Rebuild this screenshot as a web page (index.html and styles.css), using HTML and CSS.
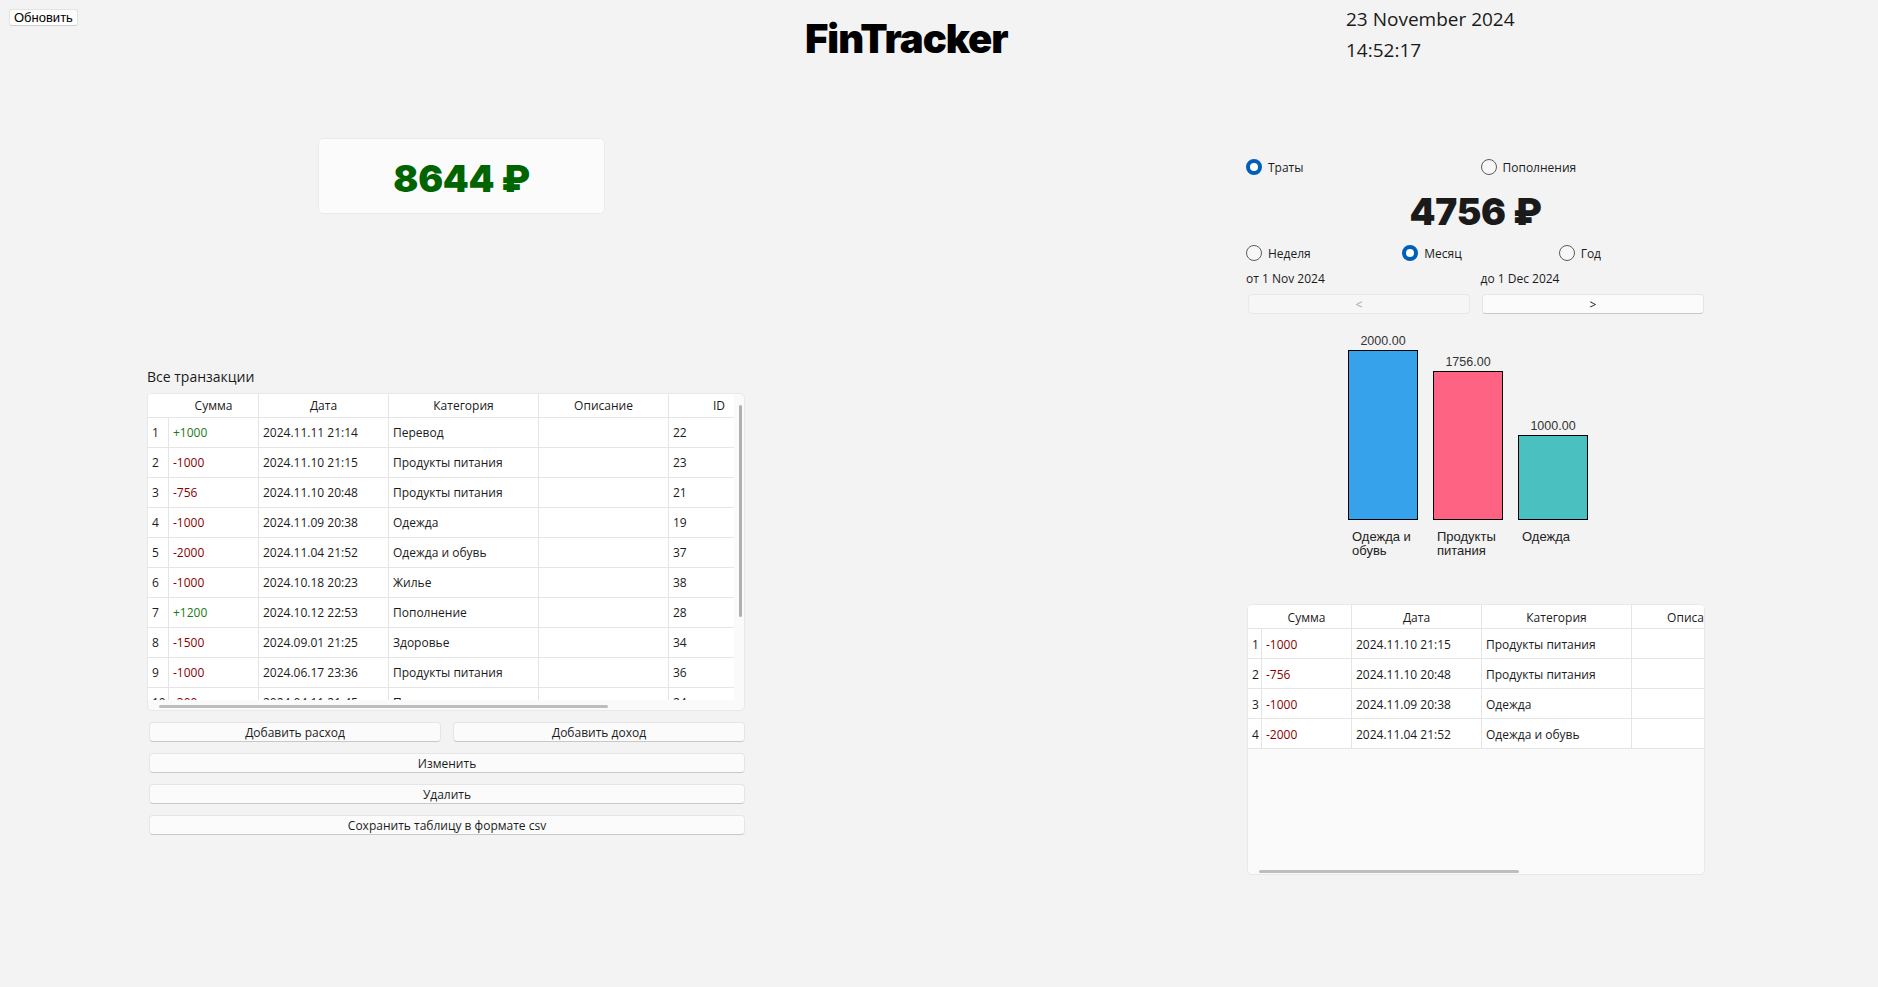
FILE: index.html
```html
<!DOCTYPE html>
<html lang="ru">
<head>
<meta charset="utf-8">
<title>FinTracker</title>
<link rel="stylesheet" href="styles.css">
</head>
<body>
<header class="topbar">
  <div class="topbar-left"><button class="btn-refresh">Обновить</button></div>
  <h1 class="title">FinTracker</h1>
  <div class="clock">
    <div>23 November 2024</div>
    <div>14:52:17</div>
  </div>
</header>

<main class="main">
  <section class="left">
    <div class="balance">8644 ₽</div>
    <div class="section-label">Все транзакции</div>

    <div class="frame frame-all">
      <div class="viewport">
        <table class="grid grid-all">
          <colgroup><col class="c-rh"><col class="c-sum"><col class="c-date"><col class="c-cat"><col class="c-desc"><col class="c-id"></colgroup>
          <thead>
            <tr><th class="corner"></th><th>Сумма</th><th>Дата</th><th>Категория</th><th>Описание</th><th>ID</th></tr>
          </thead>
          <tbody>
            <tr><td class="rh">1</td><td class="pos">+1000</td><td>2024.11.11 21:14</td><td>Перевод</td><td></td><td>22</td></tr>
            <tr><td class="rh">2</td><td class="neg">-1000</td><td>2024.11.10 21:15</td><td>Продукты питания</td><td></td><td>23</td></tr>
            <tr><td class="rh">3</td><td class="neg">-756</td><td>2024.11.10 20:48</td><td>Продукты питания</td><td></td><td>21</td></tr>
            <tr><td class="rh">4</td><td class="neg">-1000</td><td>2024.11.09 20:38</td><td>Одежда</td><td></td><td>19</td></tr>
            <tr><td class="rh">5</td><td class="neg">-2000</td><td>2024.11.04 21:52</td><td>Одежда и обувь</td><td></td><td>37</td></tr>
            <tr><td class="rh">6</td><td class="neg">-1000</td><td>2024.10.18 20:23</td><td>Жилье</td><td></td><td>38</td></tr>
            <tr><td class="rh">7</td><td class="pos">+1200</td><td>2024.10.12 22:53</td><td>Пополнение</td><td></td><td>28</td></tr>
            <tr><td class="rh">8</td><td class="neg">-1500</td><td>2024.09.01 21:25</td><td>Здоровье</td><td></td><td>34</td></tr>
            <tr><td class="rh">9</td><td class="neg">-1000</td><td>2024.06.17 23:36</td><td>Продукты питания</td><td></td><td>36</td></tr>
            <tr><td class="rh">10</td><td class="neg">-300</td><td>2024.04.11 21:45</td><td>Подарки</td><td></td><td>24</td></tr>
          </tbody>
        </table>
      </div>
      <div class="vtrack"><div class="vthumb"></div></div>
      <div class="htrack"><div class="hthumb hthumb-all"></div></div>
      <div class="corner-cell"></div>
    </div>

    <div class="actions">
      <button class="btn">Добавить расход</button>
      <button class="btn">Добавить доход</button>
      <button class="btn wide">Изменить</button>
      <button class="btn wide">Удалить</button>
      <button class="btn wide">Сохранить таблицу в формате csv</button>
    </div>
  </section>

  <section class="right">
    <div class="cols2">
      <label class="radio"><span class="dot on"></span>Траты</label>
      <label class="radio"><span class="dot"></span>Пополнения</label>
    </div>
    <div class="total">4756 ₽</div>
    <div class="cols3">
      <label class="radio"><span class="dot"></span>Неделя</label>
      <label class="radio"><span class="dot on"></span>Месяц</label>
      <label class="radio"><span class="dot"></span>Год</label>
    </div>
    <div class="cols2 range">
      <div>от 1 Nov 2024</div>
      <div>до 1 Dec 2024</div>
    </div>
    <div class="nav">
      <button class="btn disabled">&lt;</button>
      <button class="btn">&gt;</button>
    </div>

    <div class="chart">
      <div class="bar-col">
        <div class="plot"><div class="val">2000.00</div><div class="bar bar-blue" style="height:170px"></div></div>
        <div class="cat">Одежда и обувь</div>
      </div>
      <div class="bar-col">
        <div class="plot"><div class="val">1756.00</div><div class="bar bar-pink" style="height:149px"></div></div>
        <div class="cat">Продукты питания</div>
      </div>
      <div class="bar-col">
        <div class="plot"><div class="val">1000.00</div><div class="bar bar-teal" style="height:85px"></div></div>
        <div class="cat">Одежда</div>
      </div>
    </div>

    <div class="frame frame-period">
      <div class="viewport">
        <table class="grid grid-period">
          <colgroup><col class="c-rh2"><col class="c-sum"><col class="c-date"><col class="c-cat"><col class="c-desc"></colgroup>
          <thead>
            <tr><th class="corner"></th><th>Сумма</th><th>Дата</th><th>Категория</th><th>Описание</th></tr>
          </thead>
          <tbody>
            <tr><td class="rh">1</td><td class="neg">-1000</td><td>2024.11.10 21:15</td><td>Продукты питания</td><td></td></tr>
            <tr><td class="rh">2</td><td class="neg">-756</td><td>2024.11.10 20:48</td><td>Продукты питания</td><td></td></tr>
            <tr><td class="rh">3</td><td class="neg">-1000</td><td>2024.11.09 20:38</td><td>Одежда</td><td></td></tr>
            <tr><td class="rh">4</td><td class="neg">-2000</td><td>2024.11.04 21:52</td><td>Одежда и обувь</td><td></td></tr>
          </tbody>
        </table>
      </div>
      <div class="htrack"><div class="hthumb hthumb-period"></div></div>
    </div>
  </section>
</main>
</body>
</html>
```

FILE: styles.css
```css
* { box-sizing: border-box; }
html, body { margin: 0; padding: 0; }
body {
  width: 1878px;
  height: 987px;
  overflow: hidden;
  background: #f3f3f3;
  font-family: "Open Sans", "Noto Sans", sans-serif;
  font-size: 12px;
  color: #1b1b1b;
}

/* ---------- top bar ---------- */
.topbar {
  display: grid;
  grid-template-columns: 805px 541px 1fr;
  align-items: start;
  height: 138px;
}
.btn-refresh {
  margin: 9px 0 0 9px;
  height: 17px;
  padding: 0 4px;
  font: 13px/15px "Liberation Sans", Arial, sans-serif;
  color: #000;
  background: #fdfdfd;
  border: 1px solid #e3e3e3;
  border-bottom-color: #cfcfcf;
  border-radius: 3px;
}
.title {
  margin: 15px 0 0;
  font: 900 40px/48px Inter, sans-serif;
  letter-spacing: -1px;
  color: #000;
}
.clock {
  margin-top: 4px;
  font: 400 19px/31px "Open Sans", sans-serif;
  color: #1a1a1a;
}

/* ---------- main ---------- */
.main {
  display: flex;
  align-items: flex-start;
  padding-left: 147px;
  gap: 501px;
}
.left {
  width: 598px;
  display: flex;
  flex-direction: column;
}
.balance {
  margin-left: 171px;
  width: 287px;
  height: 76px;
  padding-top: 6px;
  display: flex;
  align-items: center;
  justify-content: center;
  background: #fbfbfb;
  border: 1px solid #ebebeb;
  border-radius: 5px;
  font: 900 37px/46px Inter, sans-serif;
  letter-spacing: -0.3px;
  color: #006400;
}
.section-label {
  margin-top: 152.6px;
  font-size: 14px;
  line-height: 20px;
  color: #1b1b1b;
}

/* ---------- table frames ---------- */
.frame {
  display: grid;
  background: #fafafa;
  border: 1px solid #e8e8e8;
  border-radius: 5px;
  overflow: hidden;
}
.frame-all {
  margin-top: 6.4px;
  width: 598px;
  grid-template-columns: 586px 10px;
  grid-template-rows: 306px 10px;
}
.frame-period {
  margin-left: 1px;
  width: 458px;
  grid-template-columns: 456px;
  grid-template-rows: 261px 8px;
}
.viewport { overflow: hidden; }
.vthumb {
  margin: 11px 0 0 5px;
  width: 3px;
  height: 212px;
  border-radius: 2px;
  background: #b0b0b0;
}
.htrack { overflow: hidden; }
.hthumb {
  height: 3px;
  border-radius: 2px;
  background: #bdbdbd;
}
.hthumb-all { margin: 5px 0 0 11px; width: 449px; }
.hthumb-period { margin: 4px 0 0 11px; width: 260px; }

.grid {
  border-collapse: separate;
  border-spacing: 0;
  table-layout: fixed;
}
.grid-all { width: 622px; }
.grid-period { width: 514px; }
.c-rh { width: 21px; }
.c-rh2 { width: 14px; }
.c-sum { width: 90px; }
.c-date { width: 130px; }
.c-cat { width: 150px; }
.c-desc { width: 130px; }
.c-id { width: 101px; }

.grid thead tr { height: 24px; }
.grid tbody tr { height: 30px; }
.grid th {
  padding: 1px 0 0;
  font-weight: 400;
  text-align: center;
  white-space: nowrap;
  overflow: hidden;
  background: #fff;
  border-bottom: 1px solid #e5e5e5;
  border-right: 1px solid #e5e5e5;
}
.grid th.corner { border-right: none; }
.grid td {
  padding: 1px 0 0 4px;
  white-space: nowrap;
  overflow: hidden;
  background: #fff;
  border-bottom: 1px solid #e5e5e5;
  border-right: 1px solid #e5e5e5;
}
.pos { color: #1a7a12; }
.neg { color: #8b0000; }

/* ---------- buttons ---------- */
.actions {
  margin: 10.7px 0 0 2px;
  display: grid;
  grid-template-columns: 1fr 1fr;
  gap: 11px 12px;
}
.actions .wide { grid-column: 1 / -1; }
.btn {
  height: 20px;
  padding: 1px 0 0;
  font: 12px/17px "Open Sans", "Noto Sans", sans-serif;
  color: #1b1b1b;
  background: #fbfbfb;
  border: 1px solid #e5e5e5;
  border-bottom-color: #c8c8c8;
  border-radius: 4px;
}
.btn.disabled {
  color: #a3a3a3;
  background: #f6f6f6;
  border-color: #e8e8e8;
}

/* ---------- right panel ---------- */
.right {
  width: 459px;
  display: flex;
  flex-direction: column;
  padding-top: 19px;
}
.cols2 {
  display: grid;
  grid-template-columns: 1fr 1fr;
  column-gap: 10px;
}
.cols3 {
  margin-top: 8px;
  display: grid;
  grid-template-columns: repeat(3, 1fr);
  column-gap: 10px;
}
.radio {
  display: flex;
  align-items: center;
  gap: 6px;
  height: 20px;
  font-size: 12px;
}
.dot {
  flex: none;
  width: 16px;
  height: 16px;
  border-radius: 50%;
  border: 1px solid #5c5c5c;
  background: #f7f7f7;
}
.dot.on {
  border: 4.5px solid #005fb8;
  background: #fff;
}
.total {
  margin-top: 12px;
  text-align: center;
  font: 900 37px/46px Inter, sans-serif;
  letter-spacing: -0.2px;
  color: #1a1a1a;
}
.range {
  margin-top: 6.5px;
  line-height: 17px;
}
.nav {
  margin: 7.5px 1px 0 2px;
  display: grid;
  grid-template-columns: 1fr 1fr;
  gap: 12px;
}

/* ---------- chart ---------- */
.chart {
  margin-top: 8px;
  height: 282px;
  display: flex;
  justify-content: center;
  gap: 15px;
  padding-right: 15px;
}
.bar-col {
  width: 70px;
  display: flex;
  flex-direction: column;
}
.plot {
  height: 198px;
  display: flex;
  flex-direction: column;
  justify-content: flex-end;
}
.val {
  margin-bottom: 2px;
  font: 12.5px/14px "Liberation Sans", Arial, sans-serif;
  text-align: center;
  color: #333;
}
.bar { border: 1px solid #000; }
.bar-blue { background: #36a2eb; }
.bar-pink { background: #ff6384; }
.bar-teal { background: #4bc0c0; }
.cat {
  margin-top: 9.5px;
  padding-left: 4px;
  font: 13px/14px "Liberation Sans", Arial, sans-serif;
  color: #222;
}
```
